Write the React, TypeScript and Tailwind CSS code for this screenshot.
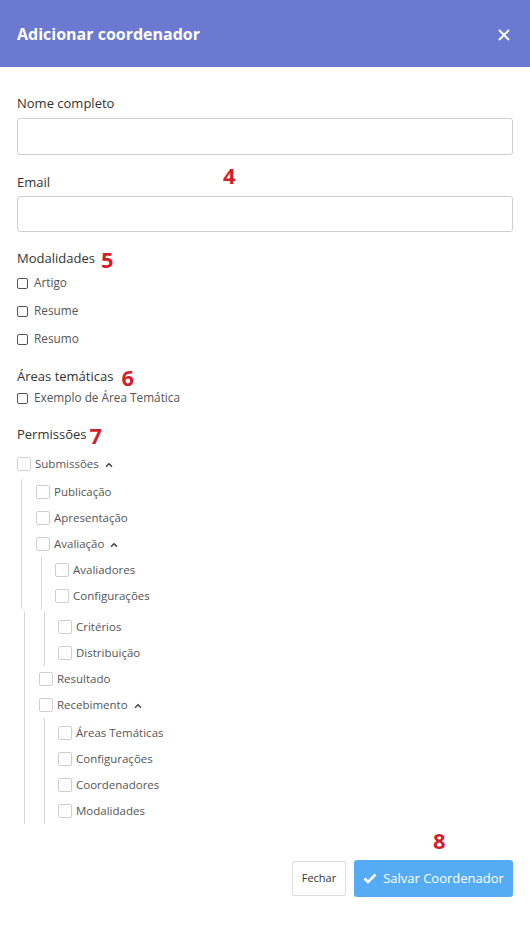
import React from "react";

const font = { fontFamily: '"Open Sans", "Noto Sans", sans-serif' };

function Chevron() {
  return (
    <svg width="8" height="6" viewBox="0 0 8 6" className="ml-[6px] mt-[1px]">
      <path d="M1 4.8 L4 1.8 L7 4.8" fill="none" stroke="#444" strokeWidth="1.5" />
    </svg>
  );
}

function TreeRow({ label, open }: { label: string; open?: boolean }) {
  return (
    <div className="flex h-[26px] items-center">
      <span className="h-[14px] w-[14px] rounded-[2px] border border-[#cfcfcf] bg-white" />
      <span className="ml-[4px] text-[11.5px] text-[#555]">{label}</span>
      {open && <Chevron />}
    </div>
  );
}

function Check({ label }: { label: string }) {
  return (
    <div className="flex h-[28px] items-center">
      <span className="h-[11px] w-[11px] rounded-[2px] border border-[#555] bg-white" />
      <span className="ml-[6px] text-[11.8px] text-[#555]">{label}</span>
    </div>
  );
}

function Num({ n, ml }: { n: string; ml: string }) {
  return <span className={`${ml} text-[22px] font-bold leading-[20px] text-[#d21f2c]`}>{n}</span>;
}

export default function App() {
  return (
    <div className="relative min-h-[927px] w-[530px] bg-white" style={font}>
      <div className="flex h-[67px] items-center justify-between bg-[#6c79d1] pl-[17px] pr-[20px]">
        <span className="text-[16px] font-bold text-white">Adicionar coordenador</span>
        <svg width="12" height="12" viewBox="0 0 12 12" className="mt-[3px]">
          <path d="M1 1 L11 11 M11 1 L1 11" stroke="white" strokeWidth="2" />
        </svg>
      </div>

      <div className="px-[17px]">
        <div className="mt-[27px] text-[13px] leading-[18px] text-[#333]">Nome completo</div>
        <div className="mt-[6px] h-[37px] w-full rounded-[3px] border border-[#cfcfcf]" />
        <div className="mt-[18px] text-[13px] leading-[18px] text-[#333]">Email</div>
        <div className="mt-[5px] h-[36px] w-full rounded-[3px] border border-[#cfcfcf]" />

        <div className="mt-[17px] flex h-[20px] items-center text-[13px] text-[#333]">
          Modalidades<Num n="5" ml="ml-[6px]" />
        </div>
        <div>
          <Check label="Artigo" />
          <Check label="Resume" />
          <Check label="Resumo" />
        </div>

        <div className="mt-[14px] flex h-[20px] items-center text-[13px] text-[#333]">
          Áreas temáticas<Num n="6" ml="ml-[8px]" />
        </div>
        <div className="mt-[-3px]">
          <Check label="Exemplo de Área Temática" />
        </div>

        <div className="mt-[13px] flex h-[20px] items-center text-[13px] text-[#333]">
          Permissões<Num n="7" ml="ml-[3px]" />
        </div>

        <div className="mt-[6px]">
          <TreeRow label="Submissões" open />
          <div className="ml-[4px] mt-[2px] border-l border-[#d6d6d6] pl-[14px]">
            <TreeRow label="Publicação" />
            <TreeRow label="Apresentação" />
            <TreeRow label="Avaliação" open />
            <div className="ml-[5px] border-l border-[#d6d6d6] pl-[13px]">
              <TreeRow label="Avaliadores" />
              <TreeRow label="Configurações" />
            </div>
          </div>
          <div className="ml-[7px] mt-[3px] border-l border-[#d6d6d6] pl-[14px]">
            <div className="ml-[5px] border-l border-[#d6d6d6] pl-[13px] pt-[2px]">
              <TreeRow label="Critérios" />
              <TreeRow label="Distribuição" />
            </div>
            <TreeRow label="Resultado" />
            <TreeRow label="Recebimento" open />
            <div className="ml-[5px] border-l border-[#d6d6d6] pl-[13px] pt-[2px]">
              <TreeRow label="Áreas Temáticas" />
              <TreeRow label="Configurações" />
              <TreeRow label="Coordenadores" />
              <TreeRow label="Modalidades" />
            </div>
          </div>
        </div>

        <div className="mt-[36px] flex items-center justify-end gap-[8px]">
          <button className="h-[35px] w-[54px] rounded-[2px] border border-[#dcdcdc] bg-white text-[11px] text-[#333]">
            Fechar
          </button>
          <button className="flex h-[37px] w-[159px] items-center justify-center gap-[6px] rounded-[3px] bg-[#55abf4] text-[13px] text-white">
            <svg width="14" height="11" viewBox="0 0 14 11">
              <path d="M1.5 5.5 L5 9 L12.5 1.5" fill="none" stroke="white" strokeWidth="2.6" />
            </svg>
            Salvar Coordenador
          </button>
        </div>
      </div>

      <span className="absolute left-[223px] top-[164px] text-[22px] font-bold leading-none text-[#d21f2c]">4</span>
      <span className="absolute left-[433px] top-[829px] text-[22px] font-bold leading-none text-[#d21f2c]">8</span>
    </div>
  );
}
